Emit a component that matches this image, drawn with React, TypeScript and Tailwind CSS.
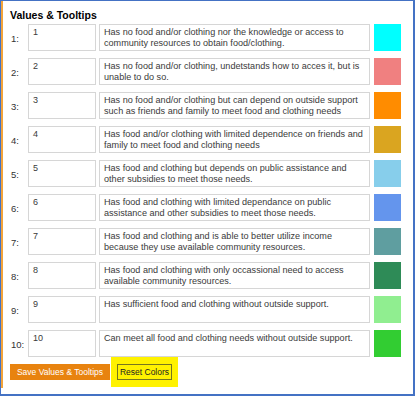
import React from "react";

interface Level {
  value: string;
  tooltip: string;
  color: string;
}

const levels: Level[] = [
  {
    value: "1",
    tooltip:
      "Has no food and/or clothing nor the knowledge or access to community resources to obtain food/clothing.",
    color: "bg-[#00ffff]",
  },
  {
    value: "2",
    tooltip:
      "Has no food and/or clothing, undetstands how to acces it, but is unable to do so.",
    color: "bg-[#f08080]",
  },
  {
    value: "3",
    tooltip:
      "Has no food and/or clothing but can depend on outside support such as friends and family to meet food and clothing needs",
    color: "bg-[#ff8c00]",
  },
  {
    value: "4",
    tooltip:
      "Has food and/or clothing with limited dependence on friends and family to meet food and clothing needs",
    color: "bg-[#daa520]",
  },
  {
    value: "5",
    tooltip:
      "Has food and clothing but depends on public assistance and other subsidies to meet those needs.",
    color: "bg-[#87ceeb]",
  },
  {
    value: "6",
    tooltip:
      "Has food and clothing with limited dependance on public assistance and other subsidies to meet those needs.",
    color: "bg-[#6495ed]",
  },
  {
    value: "7",
    tooltip:
      "Has food and clothing and is able to better utilize income because they use available community resources.",
    color: "bg-[#5f9ea0]",
  },
  {
    value: "8",
    tooltip:
      "Has food and clothing with only occassional need to access available community resources.",
    color: "bg-[#2e8b57]",
  },
  {
    value: "9",
    tooltip: "Has sufficient food and clothing without outside support.",
    color: "bg-[#90ee90]",
  },
  {
    value: "10",
    tooltip: "Can meet all food and clothing needs without outside support.",
    color: "bg-[#32cd32]",
  },
];

const App: React.FC = () => {
  return (
    <div
      className="w-[415px] h-[396px] bg-white border-t border-l border-r-2 border-b-2 border-[#4472c4]"
      style={{ fontFamily: '"Liberation Sans", Arial, sans-serif' }}
    >
      <div className="h-[387px] border-l-2 border-[#f2a33a] pl-[7px] pt-[7px]">
        <p className="text-[10.5px] font-bold leading-[14px] text-black mb-[2px]">
          Values &amp; Tooltips
        </p>
        <div className="flex flex-col gap-[7px]">
          {levels.map((item) => (
            <div key={item.value} className="flex items-center h-[27px]">
              <span className="w-[18px] pl-[1px] mt-[3px] text-[9.5px] text-[#333]">
                {item.value}:
              </span>
              <div className="w-[68px] h-[27px] border border-[#d6d6d6] px-[4px] pt-[2px] text-[9px] leading-[11px] text-[#3a3a3a]">
                {item.value}
              </div>
              <div className="ml-[3px] w-[271px] h-[27px] border border-[#d6d6d6] px-[4px] pt-[2px] text-[9.1px] leading-[11px] text-[#3a3a3a]">
                {item.tooltip}
              </div>
              <div className={`ml-[4px] w-[27px] h-[27px] ${item.color}`}></div>
            </div>
          ))}
        </div>
        <div className="flex items-center">
          <button className="h-[16px] w-[100px] bg-[#e8830f] text-white text-[8.5px] leading-[16px]">
            Save Values &amp; Tooltips
          </button>
          <div className="flex ml-[1px] bg-[#fff200] px-[6px] py-[7px]">
            <button className="h-[16px] w-[55px] border border-[#77771f] text-[8.5px] leading-[14px] text-[#222]">
              Reset Colors
            </button>
          </div>
        </div>
      </div>
    </div>
  );
};

export default App;
